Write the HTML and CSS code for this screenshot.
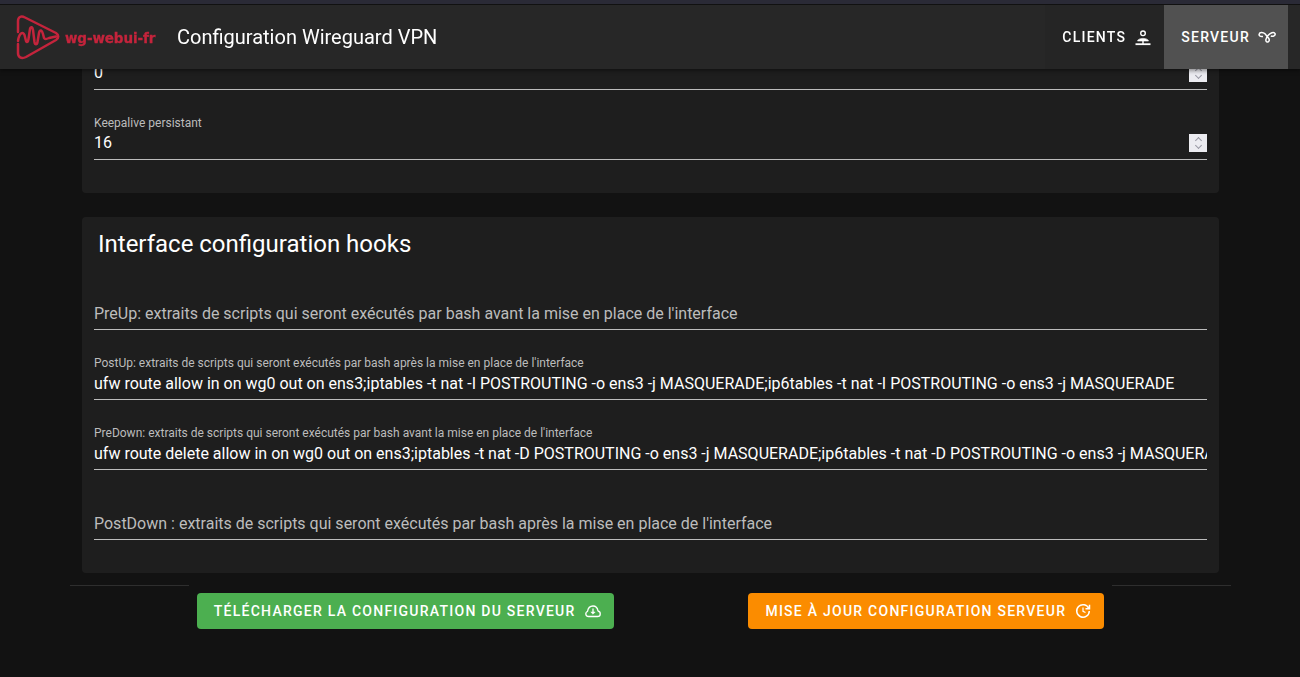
FILE: index.html
```html
<!DOCTYPE html>
<html lang="fr">
<head>
<meta charset="utf-8">
<title>Configuration Wireguard VPN</title>
<link rel="stylesheet" href="styles.css">
</head>
<body>
<div class="strip"></div>
<header class="appbar">
  <div class="logo">
    <svg class="logo-mark" width="46" height="46" viewBox="0 0 46 46" fill="none" stroke="#c4243c" stroke-width="2.500" stroke-linecap="round" stroke-linejoin="round">
      <path d="M2 18 V7 C2 3 5 1.500 9 3.500 L40 19 C43 21 43 24 40 26 L10 43 C5 45.500 2 43 2 39 V30"/>
      <path d="M2 27 C3 19 7 17 8.500 21 L10 27 C11 29 12 28 12.500 25 L14 15 C15 12 16.500 13 17 16 L18.500 28 C19 31 21 31 21.500 28 L23 19 C24 15 26 16 27 20 L28 24 C29 26 31 25 33 24 L40 22.500"/>
    </svg>
    <span class="logo-text">wg-webui-fr</span>
  </div>
  <div class="app-title">Configuration Wireguard VPN</div>
  <nav class="nav">
    <a class="nav-item">CLIENTS
      <svg width="18" height="18" viewBox="0 0 18 18" fill="none" stroke="#fff" stroke-width="1.400"><circle cx="9" cy="5.300" r="2.300"/><path d="M3.500 13 C4 9.500 14 9.500 14.500 13 Z" fill="#fff" stroke-width=".6"/><path d="M9 13v3"/><path d="M1.500 16.200h15" stroke-width="1.800"/></svg>
    </a>
    <a class="nav-item active">SERVEUR
      <svg width="18" height="18" viewBox="0 0 18 18" fill="none" stroke="#fff" stroke-width="1.500"><path d="M5 8.500 C2 9 .8 7.500 1.200 6 C1.600 4 5 3.800 7 5.800 L10.800 10.500 C12 12.500 10.500 14.500 9 14 C7.200 13.400 7.500 10.500 10 7.500 C12 5 16 3.200 17 5.500 C17.800 7.500 15 9 12.800 8"/></svg>
    </a>
  </nav>
</header>
<main class="page">
  <section class="card first">
    <div class="field"><span class="value">0</span><span class="spin"><i class="up"></i><i class="down"></i></span></div>
    <div class="field"><label class="label">Keepalive persistant</label><span class="value">16</span><span class="spin"><i class="up"></i><i class="down"></i></span></div>
  </section>
  <section class="card second">
    <h2 class="card-title">Interface configuration hooks</h2>
    <div class="field"><span class="value placeholder">PreUp: extraits de scripts qui seront exécutés par bash avant la mise en place de l'interface</span></div>
    <div class="field"><label class="label">PostUp: extraits de scripts qui seront exécutés par bash après la mise en place de l'interface</label><span class="value">ufw route allow in on wg0 out on ens3;iptables -t nat -I POSTROUTING -o ens3 -j MASQUERADE;ip6tables -t nat -I POSTROUTING -o ens3 -j MASQUERADE</span></div>
    <div class="field"><label class="label">PreDown: extraits de scripts qui seront exécutés par bash avant la mise en place de l'interface</label><span class="value">ufw route delete allow in on wg0 out on ens3;iptables -t nat -D POSTROUTING -o ens3 -j MASQUERADE;ip6tables -t nat -D POSTROUTING -o ens3 -j MASQUERADE</span></div>
    <div class="field"><span class="value placeholder">PostDown : extraits de scripts qui seront exécutés par bash après la mise en place de l'interface</span></div>
  </section>
  <div class="actions">
    <hr class="rule">
    <button class="btn green">TÉLÉCHARGER LA CONFIGURATION DU SERVEUR
      <svg width="18" height="18" viewBox="0 0 18 18" fill="none" stroke="#fff" stroke-width="1.300" stroke-linejoin="round"><path d="M4.500 14.500 C1.500 14.500 .8 10.500 3.500 9.500 C4 6 6.500 4 9 4 C11.500 4 13.500 6 14 9 C17 9.500 17.200 14.500 13.500 14.500 Z"/><path d="M9 6.500V10" stroke-width="1.300"/><path d="M6.800 10H11.200L9 12.200Z" fill="#fff" stroke-width=".5"/></svg>
    </button>
    <hr class="rule hidden">
    <button class="btn orange">MISE À JOUR CONFIGURATION SERVEUR
      <svg width="18" height="18" viewBox="0 0 18 18" fill="none" stroke="#fff" stroke-width="1.500"><path d="M14.800 6.500 A6.300 6.300 0 1 0 15.300 9"/><path d="M15.500 2.800V6.800H11.500" stroke-width="1.500"/><path d="M9 5.500V9.300L11.500 10.500" stroke-width="1.200"/></svg>
    </button>
    <hr class="rule">
  </div>
</main>
</body>
</html>
```
FILE: styles.css
```css
* { box-sizing: border-box; }
html, body { margin: 0; height: 100%; overflow: hidden; }
body { background: #121212; color: #fff; font-family: Roboto, "Liberation Sans", sans-serif; }
.strip { position: fixed; top: 0; left: 0; right: 0; height: 5px; background: #2a2a36; border-bottom: 1px solid #111; z-index: 3; }
.appbar { position: fixed; top: 5px; left: 0; right: 0; height: 64px; display: flex; align-items: center; background: #272727; box-shadow: 0 2px 4px rgba(0,0,0,.4); z-index: 2; }
.logo { display: flex; align-items: center; margin-left: 16px; width: 161px; }
.logo-mark { flex: none; }
.logo-text { margin-left: 3px; margin-top: 2px; font: 700 13.500px "DejaVu Sans", sans-serif; letter-spacing: -.1px; color: #c4243c; -webkit-text-stroke: .3px #c4243c; white-space: nowrap; }
.app-title { font-size: 20px; }
.nav { margin-left: auto; margin-right: 12px; display: flex; height: 100%; }
.nav-item { display: flex; align-items: center; gap: 8px; padding: 0 12px 0 17px; font-size: 14px; font-weight: 500; letter-spacing: 1.250px; height: 100%; background: #252525; }
.nav-item.active { background: #515151; }
.page { padding: 0 81px 0 82px; }
.card { background: #1e1e1e; border-radius: 4px; padding: 0 12px; }
.card.first { margin-top: 20px; height: 173px; }
.card.second { margin-top: 24px; height: 356px; }
.card-title { margin: 0 0 0 4px; padding-top: 13px; height: 43px; font-size: 24px; font-weight: 400; line-height: 28px; }
.field { position: relative; height: 70px; border-bottom: 1px solid #bcbcbc; overflow: hidden; white-space: nowrap; }
.label { position: absolute; left: 0; top: 26px; font-size: 12px; line-height: 14px; color: #bcbcbc; }
.value { position: absolute; left: 0; top: 43px; font-size: 16px; line-height: 20px; }
.second .value { top: 44px; }
.placeholder { color: #bcbcbc; }
.spin { position: absolute; right: 0; top: 44px; width: 18px; height: 18px; background: #ececf1; display: flex; flex-direction: column; align-items: center; justify-content: center; gap: 3px; }
.spin i { width: 5px; height: 5px; border-left: 1.200px solid #9a9aa6; border-top: 1.200px solid #9a9aa6; }
.spin .up { transform: translateY(1px) rotate(45deg); }
.spin .down { transform: translateY(-2px) rotate(225deg); }
.actions { display: flex; gap: 8px; margin: 12px -12px 0 -12px; height: 44px; align-items: flex-start; }
.rule { flex: 1; margin: 0; border: 0; border-top: 1px solid #2e2e2e; }
.rule.hidden { visibility: hidden; }
.btn { margin-top: 8px; height: 36px; padding: 0 12px 0 17px; display: flex; align-items: center; gap: 8px; border: 0; border-radius: 4px; color: #fff; font: 500 14px Roboto, sans-serif; letter-spacing: 1.250px; white-space: nowrap; }
.green { background: #4caf50; }
.orange { background: #fb8c00; }
```
